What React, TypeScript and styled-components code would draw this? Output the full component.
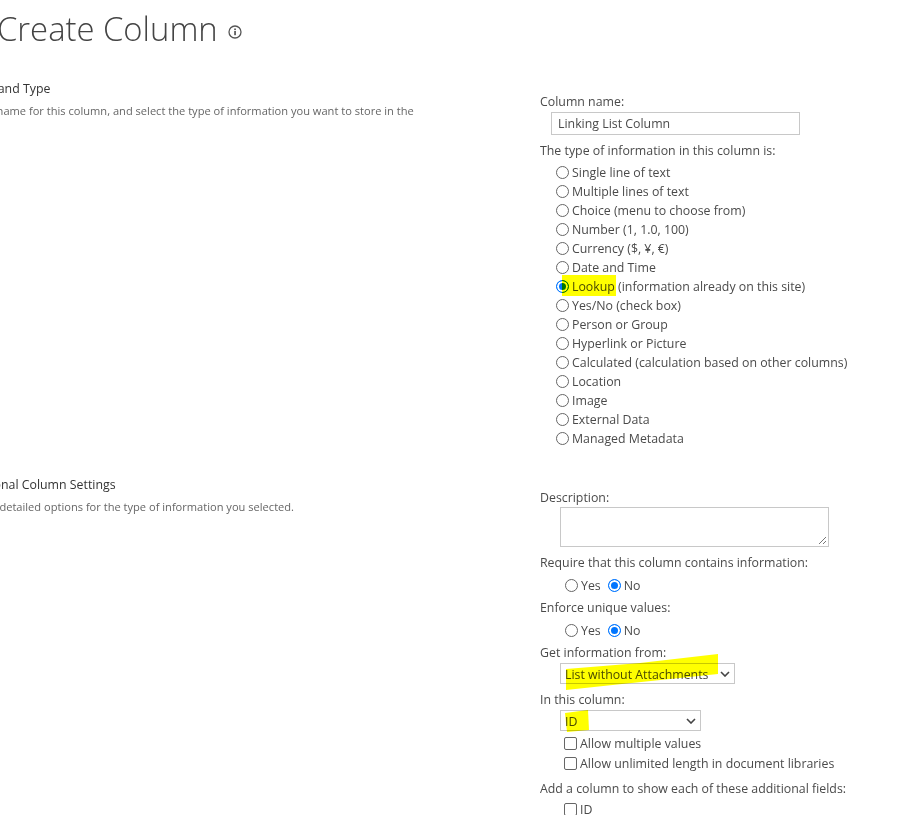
import styled, { createGlobalStyle } from 'styled-components';

const GlobalStyle = createGlobalStyle`
  html, body {
    margin: 0;
    padding: 0;
    background: #fff;
    overflow: hidden;
  }
`;

const types = [
  'Single line of text',
  'Multiple lines of text',
  'Choice (menu to choose from)',
  'Number (1, 1.0, 100)',
  'Currency ($, ¥, €)',
  'Date and Time',
  'Lookup',
  'Yes/No (check box)',
  'Person or Group',
  'Hyperlink or Picture',
  'Calculated (calculation based on other columns)',
  'Location',
  'Image',
  'External Data',
  'Managed Metadata',
];

const Page = styled.div`
  width: 924px;
  height: 815px;
  overflow: hidden;
  font-family: 'Open Sans', 'Noto Sans', sans-serif;
  font-size: 12.35px;
  color: #4a4a4a;
`;

const TitleRow = styled.div`
  box-sizing: border-box;
  display: flex;
  align-items: center;
  gap: 10px;
  height: 60px;
  padding-bottom: 4px;
  margin-left: -3px;
  > svg {
    margin-top: 8px;
  }
`;

const Title = styled.h1`
  margin: 0;
  font-size: 32.8px;
  font-weight: 300;
  color: #444;
`;

const Section = styled.section<{ $height: number }>`
  display: grid;
  grid-template-columns: 540px 1fr;
  height: ${p => p.$height}px;
`;

const Intro = styled.div`
  margin-left: -40px;
  padding-top: 21px;
`;

const IntroTitle = styled.h3`
  margin: 0 0 6px;
  font-size: 12.35px;
  line-height: 16px;
  font-weight: 400;
  color: #333;
`;

const IntroText = styled.p`
  margin: 0;
  font-size: 11.1px;
  line-height: 16px;
  color: #666;
  white-space: nowrap;
`;

const Fields = styled.div`
  padding-top: 34px;
`;

const Label = styled.div<{ $top?: number }>`
  line-height: 16px;
  margin-top: ${p => p.$top ?? 0}px;
`;

const TextInput = styled.div`
  box-sizing: border-box;
  width: 249px;
  height: 23px;
  margin: 2px 0 0 11px;
  padding-left: 6px;
  border: 1px solid #c8c8c8;
  line-height: 21px;
`;

const List = styled.div<{ $indent: number; $top?: number }>`
  margin-left: ${p => p.$indent}px;
  margin-top: ${p => p.$top ?? 0}px;
`;

const Row = styled.label<{ $height?: number }>`
  position: relative;
  display: flex;
  align-items: center;
  gap: 3px;
  height: ${p => p.$height ?? 19}px;
  white-space: nowrap;
`;

const Radio = styled.span<{ $on?: boolean }>`
  box-sizing: border-box;
  flex: none;
  width: 13px;
  height: 13px;
  border-radius: 50%;
  border: 1px solid ${p => (p.$on ? '#0075ff' : '#666')};
  background: ${p => (p.$on ? '#0075ff' : '#fff')};
  box-shadow: ${p => (p.$on ? 'inset 0 0 0 2px #fff' : 'none')};
`;

const Highlight = styled.span`
  position: absolute;
  left: 6px;
  top: -2px;
  width: 54px;
  height: 21px;
  background: #ffff00;
  mix-blend-mode: multiply;
`;

const Inline = styled.div`
  display: flex;
  gap: 7px;
  margin: 5px 0 0 25px;
`;

const Area = styled.div`
  position: relative;
  box-sizing: border-box;
  width: 269px;
  height: 40px;
  margin: 1px 0 0 20px;
  border: 1px solid #c8c8c8;
`;

const Grip = styled.svg`
  position: absolute;
  right: 1px;
  bottom: 1px;
`;

const SelectBox = styled.div<{ $width: number }>`
  box-sizing: border-box;
  display: flex;
  align-items: center;
  justify-content: space-between;
  width: ${p => p.$width}px;
  height: 21px;
  margin: 2px 0 0 20px;
  padding: 0 4px;
  border: 1px solid #c8c8c8;
`;

const SelectValue = styled.span`
  margin-top: 2px;
`;

const Marker = styled.svg<{ $top: number }>`
  position: absolute;
  left: 0;
  top: ${p => p.$top}px;
  pointer-events: none;
  mix-blend-mode: multiply;
`;

const SelectWrap = styled.div`
  position: relative;
`;

const Check = styled.span`
  box-sizing: border-box;
  flex: none;
  width: 13px;
  height: 13px;
  border-radius: 2px;
  border: 1px solid #666;
  background: #fff;
`;

const Chevron = () => (
  <svg width="10" height="6" viewBox="0 0 10 6">
    <path d="M1 1l4 4 4-4" fill="none" stroke="#444" strokeWidth="1.6" />
  </svg>
);

const InfoIcon = () => (
  <svg width="14" height="14" viewBox="0 0 14 14">
    <circle cx="7" cy="7" r="6" fill="none" stroke="#555" strokeWidth="1.3" />
    <rect x="6.2" y="6" width="1.7" height="4.2" fill="#555" />
    <rect x="6.2" y="3.5" width="1.7" height="1.6" fill="#555" />
  </svg>
);

export default function App() {
  return (
    <Page>
      <GlobalStyle />
      <TitleRow>
        <Title>Create Column</Title>
        <InfoIcon />
      </TitleRow>

      <Section $height={396}>
        <Intro>
          <IntroTitle>Name and Type</IntroTitle>
          <IntroText>
            Type a name for this column, and select the type of information you want to store in the
          </IntroText>
        </Intro>
        <Fields>
          <Label>Column name:</Label>
          <TextInput>Linking List Column</TextInput>
          <Label $top={8}>The type of information in this column is:</Label>
          <List $indent={16} $top={4}>
            {types.map(t => (
              <Row key={t}>
                <Radio $on={t === 'Lookup'} />
                {t === 'Lookup' ? (
                  <>
                    <Highlight />
                    <span>Lookup (information already on this site)</span>
                  </>
                ) : (
                  t
                )}
              </Row>
            ))}
          </List>
        </Fields>
      </Section>

      <Section $height={359}>
        <Intro>
          <IntroTitle>Additional Column Settings</IntroTitle>
          <IntroText>Specify detailed options for the type of information you selected.</IntroText>
        </Intro>
        <Fields>
          <Label>Description:</Label>
          <Area>
            <Grip width="10" height="10" viewBox="0 0 10 10">
              <path d="M2 9l7-7M6 9l3-3" stroke="#777" strokeWidth="1" />
            </Grip>
          </Area>
          <Label $top={8}>Require that this column contains information:</Label>
          <Inline>
            <Row><Radio />Yes</Row>
            <Row><Radio $on />No</Row>
          </Inline>
          <Label $top={5}>Enforce unique values:</Label>
          <Inline>
            <Row><Radio />Yes</Row>
            <Row><Radio $on />No</Row>
          </Inline>
          <Label $top={5}>Get information from:</Label>
          <SelectWrap>
            <SelectBox $width={175}>
              <SelectValue>List without Attachments</SelectValue>
              <Chevron />
            </SelectBox>
            <Marker $top={-9} width="190" height="40" viewBox="0 0 190 40">
              <path d="M26 15L100 9L178 0V20L82 30L26 36Z" fill="#ffff00" />
            </Marker>
          </SelectWrap>
          <Label $top={8}>In this column:</Label>
          <SelectWrap>
            <SelectBox $width={141}>
              <SelectValue>ID</SelectValue>
              <Chevron />
            </SelectBox>
            <Marker $top={0} width="60" height="30" viewBox="0 0 60 30">
              <path d="M25 3L48 0L49 20L27 22Z" fill="#ffff00" />
            </Marker>
          </SelectWrap>
          <List $indent={24} $top={2}>
            <Row $height={20}><Check />Allow multiple values</Row>
            <Row $height={20}><Check />Allow unlimited length in document libraries</Row>
          </List>
          <Label $top={8}>Add a column to show each of these additional fields:</Label>
          <List $indent={24} $top={2}>
            <Row $height={21}><Check />ID</Row>
          </List>
        </Fields>
      </Section>
    </Page>
  );
}
